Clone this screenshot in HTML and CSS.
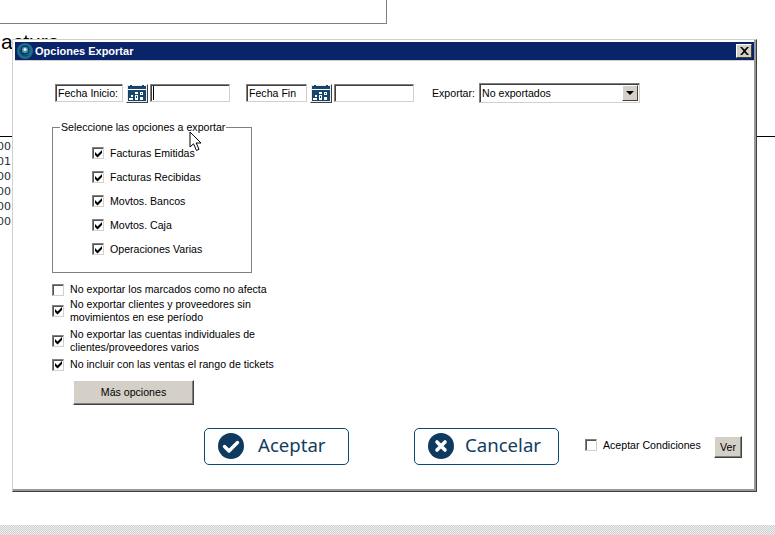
FILE: index.html
```html
<!DOCTYPE html>
<html lang="es">
<head>
<meta charset="utf-8">
<title>Opciones Exportar</title>
<link rel="stylesheet" href="styles.css">
</head>
<body>
<svg class="defs" width="0" height="0" aria-hidden="true">
  <symbol id="tick" viewBox="0 0 9 9"><path d="M1 3 L1 6 L3.5 8.5 L8 4 L8 1 L3.5 5.5 Z" fill="#000"/></symbol>
  <symbol id="cal" viewBox="0 0 18 16">
    <path d="M0 1H2V0H4V1H14V0H16V1H18V16H0Z" fill="#17456b"/>
    <path d="M0 4H18V5H0Z" fill="#fff"/>
    <path d="M3 10H5V12H3ZM1 13H5V15H1ZM7 7H10V9H7ZM7 10H10V15H7ZM12 7H15V10H12ZM12 12H15V15H12Z" fill="#fff"/>
    <path d="M8 11H9V13H8ZM13 8H14V9H13Z" fill="#17456b"/>
  </symbol>
</svg>
<div class="desktop">
  <div class="back-panel"></div>
  <div class="back-title">actura</div>
  <div class="back-rule back-rule-left"></div>
  <div class="back-rule back-rule-right"></div>
  <div class="back-nums"><span>000</span><span>001</span><span>000</span><span>000</span><span>000</span><span>000</span></div>
  <div class="back-stripe"></div>

  <section class="window">
    <header class="titlebar">
      <svg class="app-icon" viewBox="0 0 16 16" aria-hidden="true">
        <circle cx="8" cy="8" r="8" fill="#1c6d8c"/>
        <path d="M3 4.5 A6.2 6.2 0 0 0 13.5 11 A7 7 0 0 1 3 4.5Z" fill="#0f4a68"/>
        <circle cx="8" cy="7" r="4.5" fill="#0a2a5e"/>
        <circle cx="8" cy="7" r="3.2" fill="#3f93ad"/>
        <circle cx="8" cy="6.6" r="1.5" fill="#e8f2f5"/>
      </svg>
      <span class="title-text">Opciones Exportar</span>
      <button class="close" type="button" aria-label="Cerrar">
        <svg viewBox="0 0 9 8" width="9" height="8" aria-hidden="true"><path d="M0 0H2L4.5 2.5L7 0H9L5.5 4L9 8H7L4.5 5.5L2 8H0L3.5 4Z" fill="#000"/></svg>
      </button>
    </header>

    <div class="content">
      <div class="filters">
        <span class="field field-start">Fecha Inicio:</span>
        <button class="cal-btn" type="button" aria-label="Calendario"><svg width="18" height="16"><use href="#cal"/></svg></button>
        <span class="field field-date"><i class="caret"></i></span>
        <span class="field field-end">Fecha Fin</span>
        <button class="cal-btn" type="button" aria-label="Calendario"><svg width="18" height="16"><use href="#cal"/></svg></button>
        <span class="field field-date"></span>
        <span class="export-label">Exportar:</span>
        <span class="combo">
          <span class="combo-value">No exportados</span>
          <span class="combo-arrow"></span>
        </span>
      </div>

      <fieldset class="group">
        <legend>Seleccione las opciones a exportar</legend>
        <div class="group-rows">
          <label class="group-row"><span class="chk"><svg width="9" height="9"><use href="#tick"/></svg></span>Facturas Emitidas</label>
          <label class="group-row"><span class="chk"><svg width="9" height="9"><use href="#tick"/></svg></span>Facturas Recibidas</label>
          <label class="group-row"><span class="chk"><svg width="9" height="9"><use href="#tick"/></svg></span>Movtos. Bancos</label>
          <label class="group-row"><span class="chk"><svg width="9" height="9"><use href="#tick"/></svg></span>Movtos. Caja</label>
          <label class="group-row"><span class="chk"><svg width="9" height="9"><use href="#tick"/></svg></span>Operaciones Varias</label>
        </div>
      </fieldset>

      <div class="options">
        <label class="opt opt-a"><span class="chk"></span><span>No exportar los marcados como no afecta</span></label>
        <label class="opt opt-b"><span class="chk"><svg width="9" height="9"><use href="#tick"/></svg></span><span>No exportar clientes y proveedores sin<br>movimientos en ese período</span></label>
        <label class="opt opt-b"><span class="chk"><svg width="9" height="9"><use href="#tick"/></svg></span><span>No exportar las cuentas individuales de<br>clientes/proveedores varios</span></label>
        <label class="opt opt-a"><span class="chk"><svg width="9" height="9"><use href="#tick"/></svg></span><span>No incluir con las ventas el rango de tickets</span></label>
      </div>

      <button class="win-btn more" type="button">Más opciones</button>

      <div class="footer">
        <button class="action accept" type="button">
          <svg width="28" height="28" viewBox="0 0 28 28" aria-hidden="true"><circle cx="14" cy="14" r="13" fill="#0d3a5e"/><path d="M7.5 14.5L12 19L20.5 10.5" fill="none" stroke="#fff" stroke-width="3.4" stroke-linecap="round" stroke-linejoin="round"/></svg>
          <span>Aceptar</span>
        </button>
        <button class="action cancel" type="button">
          <svg width="28" height="28" viewBox="0 0 28 28" aria-hidden="true"><circle cx="14" cy="14" r="13" fill="#0d3a5e"/><path d="M10 10L18 18M18 10L10 18" fill="none" stroke="#fff" stroke-width="3.6" stroke-linecap="round"/></svg>
          <span>Cancelar</span>
        </button>
        <label class="conditions"><span class="chk"></span>Aceptar Condiciones</label>
        <button class="win-btn see" type="button">Ver</button>
      </div>
    </div>
  </section>

  <svg class="pointer" width="15" height="21" viewBox="0 0 15 21" aria-hidden="true"><path d="M1 1V16L4.5 12.8L7.5 19.5L10 18.3L7.2 12H12Z" fill="#fff" stroke="#000"/></svg>
</div>
</body>
</html>
```
FILE: styles.css
```css
* { box-sizing: border-box; }
html, body { margin: 0; padding: 0; background: #fff; }
body { font-family: "Liberation Sans", Arial, sans-serif; font-size: 10.6px; color: #000; overflow: hidden; }
.defs { position: absolute; }
button { font: inherit; color: inherit; padding: 0; margin: 0; }

.desktop { position: relative; width: 775px; height: 535px; overflow: hidden; background: #fff; }
.back-panel { position: absolute; left: -2px; top: -2px; width: 389px; height: 26px; border: 1px solid #808080; }
.back-title { position: absolute; left: 1px; top: 30px; font: 21px/24px "Liberation Sans", sans-serif; }
.back-rule { position: absolute; top: 136px; height: 1px; background: #000; }
.back-rule-left { left: 0; width: 13px; }
.back-rule-right { left: 757px; width: 18px; }
.back-nums { position: absolute; right: 764px; top: 139px; display: flex; flex-direction: column; font: 11px/15px "DejaVu Sans", sans-serif; color: #20303a; }
.back-stripe { position: absolute; left: 0; right: 0; bottom: 0; height: 10px; background: repeating-conic-gradient(#d0d0d0 0 25%, #eeeeee 0 50%) 0 0 / 2px 2px; }

.window { position: absolute; left: 12px; top: 39px; width: 745px; height: 453px; background: #fff; padding: 2px; border: 1px solid; border-color: #d4d0c8 #404040 #404040 #d4d0c8; box-shadow: inset -2px -2px 0 #999; display: flex; flex-direction: column; }

.titlebar { height: 18px; flex: none; background: #0a246a; display: flex; align-items: center; padding: 0 2px; color: #fff; }
.app-icon { width: 16px; height: 16px; flex: none; }
.title-text { font-size: 11px; font-weight: 700; margin-left: 2px; flex: 1; }
.close { width: 16px; height: 14px; background: #d4d0c8; border: 1px solid; border-color: #fff #404040 #404040 #fff; display: flex; align-items: center; justify-content: center; }

.content { flex: 1; padding: 22px 0 0 37px; display: flex; flex-direction: column; align-items: flex-start; border-top: 1px solid #d4d0c8; }

.filters { display: flex; align-items: center; height: 20px; margin-left: 3px; line-height: 14px; }
.field { height: 18px; display: flex; align-items: center; padding-left: 2px; background: #fff; border: 1px solid; border-color: #808080 #d4d0c8 #d4d0c8 #808080; box-shadow: inset 1px 1px 0 #404040; white-space: nowrap; }
.field-start { width: 68px; }
.field-end { width: 61px; margin-left: 16px; }
.field-date { width: 80px; margin-left: 2px; }
.caret { width: 1px; height: 14px; background: #000; }
.cal-btn { width: 22px; height: 19px; margin-left: 3px; background: #ecebe6; border: 1px solid; border-color: #fff #404040 #404040 #fff; display: flex; align-items: center; justify-content: center; }
.cal-btn svg { display: block; }
.export-label { margin-left: 18px; width: 47px; }
.combo { width: 161px; height: 20px; display: flex; align-items: center; justify-content: space-between; background: #fff; border: 1px solid; border-color: #808080 #d4d0c8 #d4d0c8 #808080; box-shadow: inset 1px 1px 0 #404040; padding: 0 1px 0 2px; }
.combo-arrow { width: 16px; height: 16px; background: #d4d0c8; border: 1px solid; border-color: #fff #404040 #404040 #fff; position: relative; }
.combo-arrow::after { content: ""; position: absolute; left: 3px; top: 5px; border: 4px solid transparent; border-top: 4px solid #000; border-bottom: 0; }

.group { width: 200px; height: 152px; margin: 18px 0 0; padding: 0; border: 1px solid #808080; min-width: 0; }
.group legend { padding: 0 1px; margin-left: 7px; line-height: 13px; white-space: nowrap; }
.group-rows { display: flex; flex-direction: column; padding: 7px 0 0 39px; }
.group-row { display: flex; align-items: center; height: 24px; gap: 6px; }

.chk { width: 12px; height: 12px; flex: none; background: #fff; border: 1px solid; border-color: #808080 #d4d0c8 #d4d0c8 #808080; box-shadow: inset 1px 1px 0 #555; display: flex; align-items: center; justify-content: center; }
.chk svg { display: block; }

.options { display: flex; flex-direction: column; margin-top: 9px; }
.opt { display: flex; align-items: center; gap: 6px; line-height: 13px; }
.opt-a { height: 15px; }
.opt-b { height: 29px; }
.opt-a + .opt-b { margin-top: -1px; }
.opt-b + .opt-b { margin-top: 1px; }
.opt-b + .opt-a { margin-top: 2px; }

.win-btn { background: #d4d0c8; border: 1px solid; border-color: #fff #404040 #404040 #fff; box-shadow: inset -1px -1px 0 #808080; }
.more { width: 121px; height: 25px; margin: 8px 0 0 21px; padding-bottom: 2px; }

.footer { display: flex; align-items: center; margin: 23px 0 0 152px; }
.action { width: 145px; height: 37px; background: #fff; border: 1px solid #0d4a72; border-radius: 5px; display: flex; align-items: center; font-family: "Noto Sans", sans-serif; font-size: 18.6px; line-height: 30px; color: #123d60; padding-bottom: 4px; }
.action svg { flex: none; margin-top: 2px; }
.accept { padding-left: 12px; gap: 13px; }
.cancel { padding-left: 12px; gap: 10px; margin-left: 65px; }
.conditions { display: flex; align-items: center; gap: 6px; margin-left: 26px; width: 129px; margin-top: -4px; }
.see { width: 28px; height: 22px; margin-top: 1px; }

.pointer { position: absolute; left: 189px; top: 131px; }
```
